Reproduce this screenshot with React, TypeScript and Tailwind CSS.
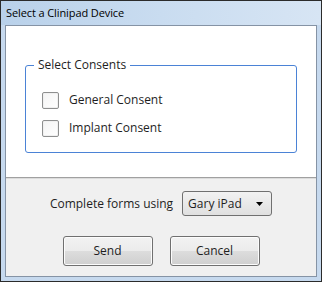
import React from "react";

const font = { fontFamily: '"Open Sans", "Noto Sans", sans-serif' };

function CheckRow({ label }: { label: string }) {
  return (
    <label className="flex items-center h-[18px]">
      <span className="w-[17px] h-[17px] border border-[#8e8f8f] rounded-[2px] bg-gradient-to-br from-[#f4f4f4] to-white shadow-[inset_0_0_0_1px_#f0f0f0]" />
      <span className="ml-[10px] text-[12px] text-[#1e1e1e]">{label}</span>
    </label>
  );
}

export default function App() {
  return (
    <div
      className="w-[322px] h-[282px] border border-[#2b2b2b] bg-[#c6d9ee] flex flex-col"
      style={font}
    >
      <div className="h-[24px] flex items-center pl-[5px] bg-gradient-to-r from-[#b9d1ea] via-[#c9dcf0] to-[#d7e5f4] text-[11px] tracking-[-0.1px] text-black">
        Select a Clinipad Device
      </div>
      <div className="mx-[4px] h-[252px] border border-[#8593a5] flex flex-col">
        <div className="h-[151px] bg-white pt-[31px] px-[19px]">
          <fieldset className="border border-[#4b83d6] rounded-[3px] h-[96px]">
            <legend className="ml-[8px] px-[4px] text-[12px] text-[#1e1e1e] leading-[16px]">
              Select Consents
            </legend>
            <div className="flex flex-col gap-[10px] pl-[16px] pt-[18px]">
              <CheckRow label="General Consent" />
              <CheckRow label="Implant Consent" />
            </div>
          </fieldset>
        </div>
        <div className="h-[2px] bg-[#a0a0a0] border-b border-[#dcdcdc]" />
        <div className="flex-1 bg-[#f0f0f0] flex flex-col items-center pt-[12px]">
          <div className="flex items-center gap-[9px]">
            <span className="text-[12px] text-[#1e1e1e]">Complete forms using</span>
            <div className="w-[90px] h-[25px] border border-[#707070] rounded-[3px] bg-gradient-to-b from-[#f2f2f2] to-[#e0e0e0] flex items-center px-[5px] justify-between">
              <span className="text-[12px] text-[#1e1e1e]">Gary iPad</span>
              <svg width="7" height="4" viewBox="0 0 7 4" className="mr-[3px]">
                <path d="M0 0h7L3.5 4z" fill="#000" />
              </svg>
            </div>
          </div>
          <div className="flex gap-[17px] mt-[20px]">
            {["Send", "Cancel"].map((t) => (
              <button
                key={t}
                className="w-[90px] h-[30px] border border-[#707070] rounded-[3px] text-[12px] text-[#1e1e1e] bg-[linear-gradient(#f2f2f2,#ebebeb_50%,#dddddd_50%,#cfcfcf)] shadow-[inset_0_0_0_1px_#fcfcfc]"
              >
                {t}
              </button>
            ))}
          </div>
        </div>
      </div>
    </div>
  );
}
